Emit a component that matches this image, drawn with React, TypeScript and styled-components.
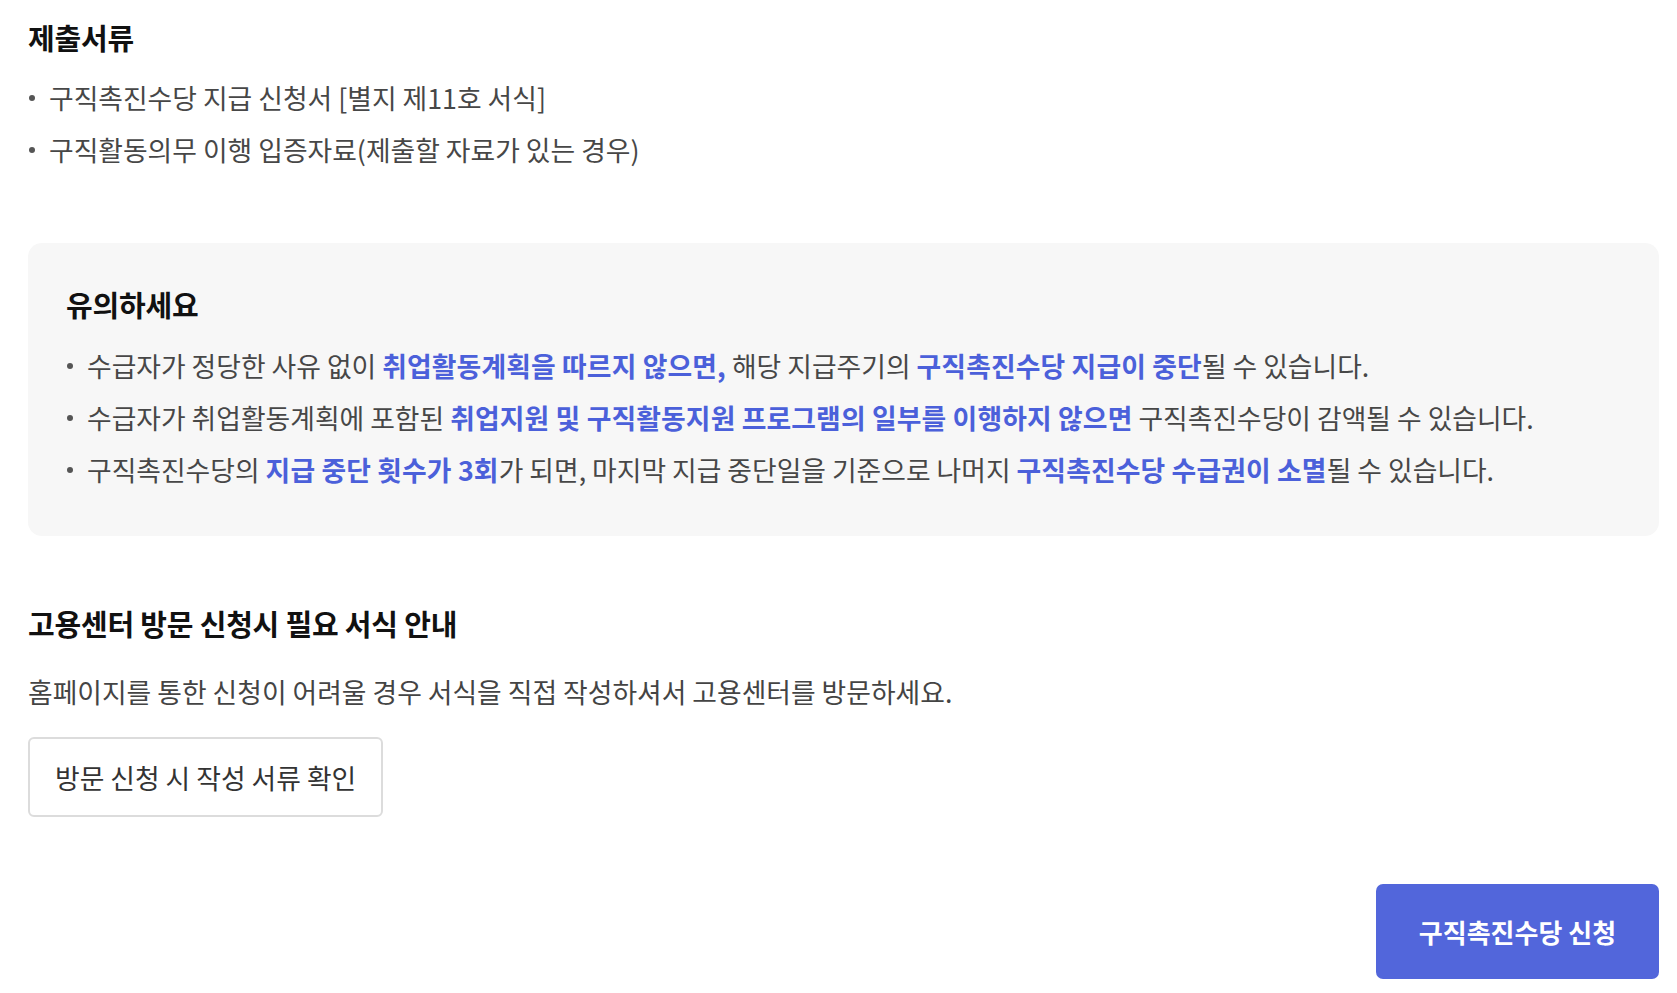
import React from "react";
import styled, { createGlobalStyle } from "styled-components";

const Global = createGlobalStyle`
  html, body { margin: 0; padding: 0; background: #ffffff; }
  body { font-family: "Noto Sans CJK KR", "Noto Sans", sans-serif; color: #444; }
  * { box-sizing: border-box; }
`;

const Page = styled.main`
  padding: 18px 18px 13px 28px;
  display: flex;
  flex-direction: column;
`;

const Title = styled.h2<{ $mt?: number }>`
  margin: ${(p) => p.$mt ?? 0}px 0 0;
  font-size: 29px;
  line-height: 38px;
  font-weight: 700;
  color: #111;
  letter-spacing: -0.2px;
`;

const List = styled.ul<{ $mt: number }>`
  list-style: none;
  margin: ${(p) => p.$mt}px 0 0;
  padding: 0;
  display: flex;
  flex-direction: column;
`;

const Item = styled.li`
  display: flex;
  align-items: center;
  font-size: 26.8px;
  line-height: 52px;
  color: #474747;
  white-space: nowrap;
`;

const Dot = styled.span`
  width: 6px;
  height: 6px;
  border-radius: 50%;
  background: #555;
  margin: 0 14px 0 1px;
  flex: none;
`;

const Em = styled.strong`
  color: #4b60da;
  font-weight: 700;
  letter-spacing: 0.15px;
`;

const Notice = styled.section`
  margin-top: 67px;
  background: #f7f7f7;
  border-radius: 14px;
  padding: 42px 40px 40px 38px;
`;

const Desc = styled.p`
  margin: 32px 0 0;
  font-size: 26.8px;
  line-height: 36px;
  color: #444;
`;

const OutlineButton = styled.button`
  align-self: flex-start;
  margin-top: 27px;
  height: 80px;
  padding: 0 25px;
  background: #fff;
  border: 2px solid #dcdcdc;
  border-radius: 6px;
  font-family: inherit;
  font-size: 26.8px;
  color: #333;
  cursor: pointer;
`;

const Footer = styled.div`
  margin-top: 67px;
  display: flex;
  justify-content: flex-end;
`;

const PrimaryButton = styled.button`
  width: 283px;
  height: 95px;
  background: #5266db;
  border: none;
  border-radius: 7px;
  font-family: inherit;
  font-size: 26px;
  font-weight: 700;
  color: #fff;
  cursor: pointer;
`;

export default function App() {
  return (
    <>
      <Global />
      <Page>
        <Title>제출서류</Title>
        <List $mt={16}>
          <Item><Dot />구직촉진수당 지급 신청서 [별지 제11호 서식]</Item>
          <Item><Dot />구직활동의무 이행 입증자료(제출할 자료가 있는 경우)</Item>
        </List>

        <Notice>
          <Title>유의하세요</Title>
          <List $mt={17}>
            <Item>
              <Dot />
              수급자가 정당한 사유 없이&nbsp;<Em>취업활동계획을 따르지 않으면,</Em>&nbsp;해당 지급주기의&nbsp;
              <Em>구직촉진수당 지급이 중단</Em>될 수 있습니다.
            </Item>
            <Item>
              <Dot />
              수급자가 취업활동계획에 포함된&nbsp;<Em>취업지원 및 구직활동지원 프로그램의 일부를 이행하지 않으면</Em>
              &nbsp;구직촉진수당이 감액될 수 있습니다.
            </Item>
            <Item>
              <Dot />
              구직촉진수당의&nbsp;<Em>지급 중단 횟수가 3회</Em>가 되면, 마지막 지급 중단일을 기준으로 나머지&nbsp;
              <Em>구직촉진수당 수급권이 소멸</Em>될 수 있습니다.
            </Item>
          </List>
        </Notice>

        <Title $mt={68}>고용센터 방문 신청시 필요 서식 안내</Title>
        <Desc>홈페이지를 통한 신청이 어려울 경우 서식을 직접 작성하셔서 고용센터를 방문하세요.</Desc>
        <OutlineButton type="button">방문 신청 시 작성 서류 확인</OutlineButton>

        <Footer>
          <PrimaryButton type="button">구직촉진수당 신청</PrimaryButton>
        </Footer>
      </Page>
    </>
  );
}
